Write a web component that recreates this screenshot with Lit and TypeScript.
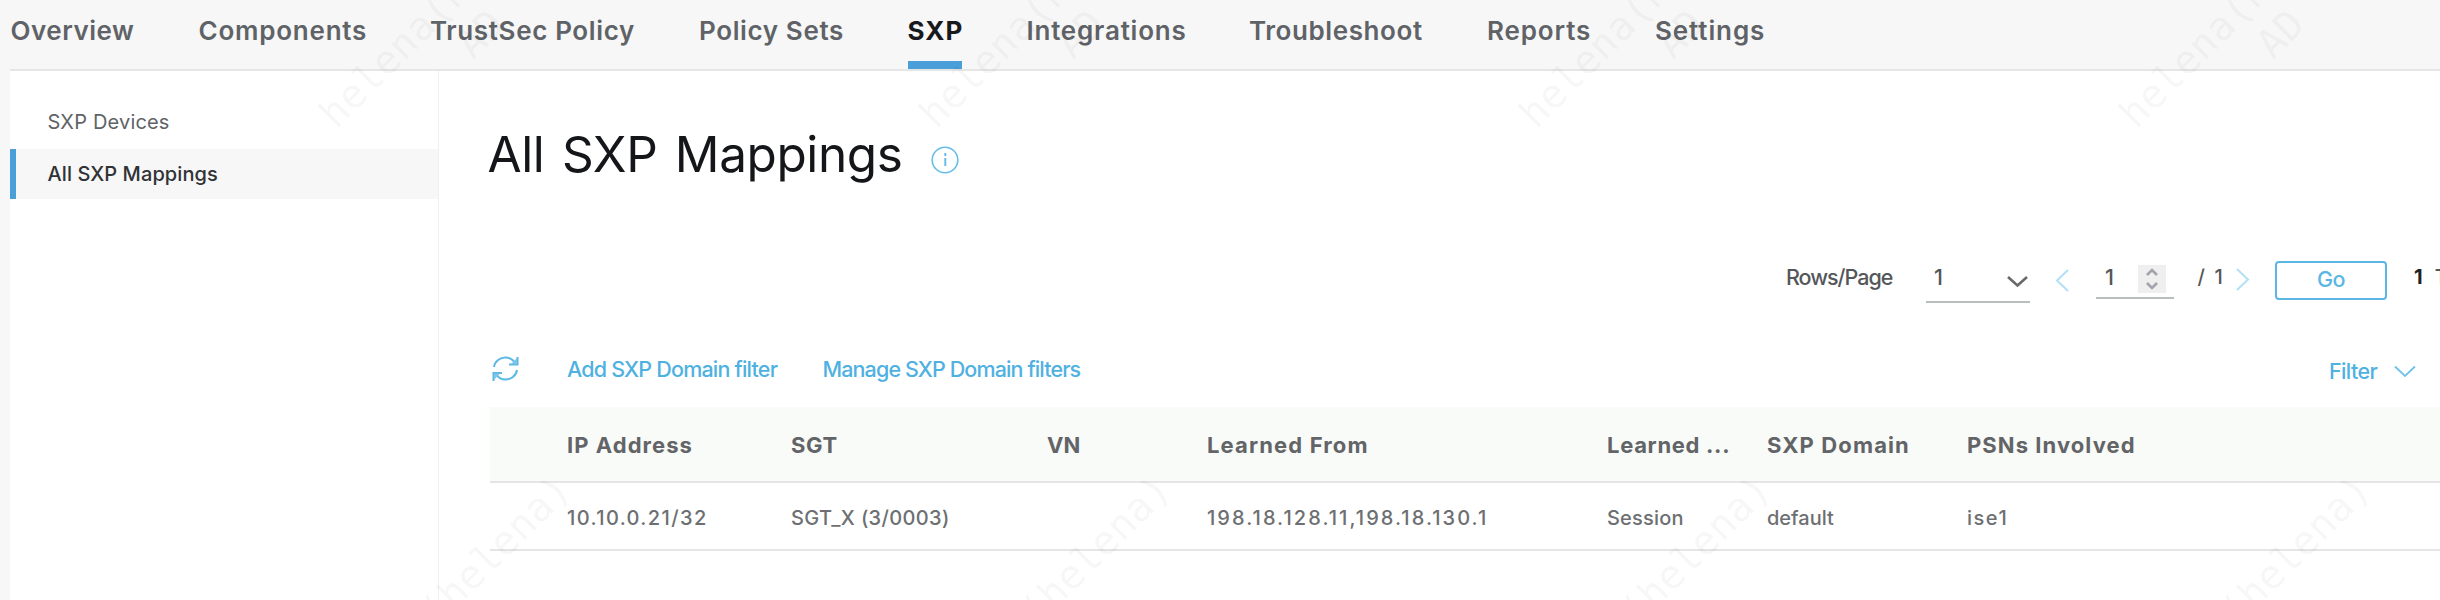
import { LitElement, html, svg, css } from 'lit';
import { customElement } from 'lit/decorators.js';
import { styleMap } from 'lit/directives/style-map.js';
import { classMap } from 'lit/directives/class-map.js';

type Label = { text: string; tracking: number };
const label = (text: string, tracking = 0): Label => ({ text, tracking });

const tabs = [
  label('Overview', 0.51), label('Components', 0.77), label('TrustSec Policy', 0.64),
  label('Policy Sets', 0.62), label('SXP', 1.05), label('Integrations', 0.78),
  label('Troubleshoot', 0.59), label('Reports', 0.86), label('Settings', 0.89),
];

const columns = [
  label('IP Address', 1.05), label('SGT', 0.68), label('VN', 0), label('Learned From', 1.14),
  label('Learned ...', 0.69), label('SXP Domain', 1.12), label('PSNs Involved', 1.07),
];

const rows = [[
  label('10.10.0.21/32', 1.4), label('SGT_X (3/0003)', 0.35), label(''),
  label('198.18.128.11,198.18.130.1', 2.05), label('Session', 0.2),
  label('default', 0), label('ise1', 1.5),
]];

const tracked = (l: Label) => styleMap({ letterSpacing: `${l.tracking}px` });

@customElement('app-root')
export class AppRoot extends LitElement {
  static styles = css`
    :host {
      display: block;
      position: relative;
      height: 600px;
      overflow: hidden;
      background: #f7f7f7;
      color: #5f6367;
      font-family: Inter, 'Liberation Sans', sans-serif;
      white-space: nowrap;
    }
    * { box-sizing: border-box; }
    svg { display: block; fill: none; flex: none; }
    .tabs {
      display: grid;
      grid-template-columns: 188px 231.5px 269px 208.5px 119px 222.5px 238px 168px 200px;
      height: 71px;
      margin-left: 10px;
      padding-left: 0.5px;
      border-bottom: 2px solid #e6e6e6;
      font-size: 26px;
      font-weight: 600;
      line-height: 61px;
    }
    .tab { justify-self: start; height: 69px; }
    .tab.on {
      color: #17191c;
      font-weight: 700;
      width: 54px;
      border-bottom: 8px solid #4a9fd8;
    }
    .body {
      display: grid;
      grid-template-columns: 429px 1fr;
      height: 529px;
      margin-left: 10px;
      background: #fff;
    }
    .side { border-right: 1px solid #f0f0f0; padding-top: 25px; font-size: 20px; }
    .item { height: 50px; line-height: 53px; padding-left: 37.5px; margin-bottom: 3px; letter-spacing: 0.18px; }
    .item.on {
      background: #f7f7f7;
      border-left: 6px solid #4a9fd8;
      padding-left: 31.5px;
      line-height: 51px;
      color: #303236;
      font-weight: 500;
      letter-spacing: 0.08px;
    }
    .main { padding-left: 51px; min-width: 0; overflow: hidden; }
    .title { display: flex; align-items: center; height: 60px; margin-top: 53px; }
    h1 {
      flex: none;
      margin: 0 0 0 -2.5px;
      font-size: 49.5px;
      line-height: 60px;
      font-weight: 400;
      letter-spacing: -0.41px;
      word-spacing: 4px;
      color: #141619;
      width: 443px;
    }
    .info { margin-top: 11px; }
    .pager {
      display: flex;
      height: 44px;
      margin: 77px 0 0 1296px;
      font-size: 21.5px;
      font-weight: 500;
      line-height: 33px;
      color: #54575a;
    }
    .pager > * { flex: none; }
    .pager .text { letter-spacing: -1.02px; width: 140px; }
    .select {
      display: flex;
      justify-content: space-between;
      width: 104px;
      height: 42px;
      padding: 0 2px 0 8px;
      border-bottom: 2.5px solid #b8bfba;
    }
    .select svg { margin-top: 14px; }
    .prev { margin: 8px 27px 0 25px; }
    .number {
      display: flex;
      justify-content: space-between;
      width: 78px;
      height: 38px;
      padding: 0 8px 0 9px;
      border-bottom: 2.5px solid #b8bfba;
    }
    .spin { margin-top: 4px; background: #efefef; }
    .of { font-size: 20px; letter-spacing: 2.08px; margin-left: 23.5px; width: 38.5px; }
    .next { margin: 7px 25px 0 0; }
    .go {
      width: 112px;
      height: 39px;
      border: 2px solid #5cb6e4;
      border-radius: 4px;
      background: #fff;
      color: #5cb6e4;
      font: inherit;
      letter-spacing: -0.47px;
      line-height: 32px;
      padding: 0 0 3px;
    }
    .total { margin-left: 27px; font-size: 20px; font-weight: 500; }
    .total b { color: #222; font-weight: 700; margin-right: 12px; }
    .tools {
      display: flex;
      height: 102px;
      font-size: 21.5px;
      font-weight: 500;
      line-height: 27px;
      color: #4fb1e2;
    }
    .refresh { margin: 51px 48.5px 0 1.5px; }
    .add { margin-top: 51px; width: 255.5px; letter-spacing: -0.8px; }
    .manage { margin-top: 51px; letter-spacing: -0.88px; width: 1506.5px; }
    .filter { display: flex; gap: 17px; margin-top: 53px; letter-spacing: -0.63px; }
    .filter svg { margin-top: 7px; }
    .row {
      display: grid;
      grid-template-columns: 224px 256px 160px 400px 160px 200px 1fr;
      padding-left: 77px;
      border-bottom: 2px solid #e4e5e4;
    }
    .head {
      height: 76px;
      line-height: 77px;
      background: #f9fbf8;
      font-size: 22px;
      font-weight: 700;
      color: #626467;
    }
    .record { height: 68px; line-height: 71px; font-size: 20px; font-weight: 500; color: #6d6f72; }
    .marks {
      position: absolute;
      inset: 0;
      pointer-events: none;
      fill: #000;
      fill-opacity: 0.052;
      font: 40px 'DejaVu Sans Mono', monospace;
    }
  `;

  private mark(x: number, y: number, text: string) {
    return svg`<text transform="translate(${x} ${y}) rotate(-45)">${text}</text>`;
  }

  render() {
    return html`
      <nav class="tabs">
        ${tabs.map((t) => html`
          <span class=${classMap({ tab: true, on: t.text === 'SXP' })} style=${tracked(t)}>${t.text}</span>`)}
      </nav>
      <div class="body">
        <aside class="side">
          <div class="item">SXP Devices</div>
          <div class="item on">All SXP Mappings</div>
        </aside>
        <main class="main">
          <div class="title">
            <h1>All SXP Mappings</h1>
            <svg class="info" width="28" height="28" stroke="#67bde8">
              <circle cx="14" cy="14" r="12.8" stroke-width="1.6" />
              <path d="M14.3 12v8M14.3 7v3" stroke-width="2" />
            </svg>
          </div>
          <div class="pager">
            <span class="text">Rows/Page</span>
            <div class="select"><span>1</span>
              <svg width="21" height="13" stroke="#67696b" stroke-width="2.6"><path d="M1 2l9.5 8.5L20 2" /></svg>
            </div>
            <svg class="prev" width="14" height="23" stroke="#b2e0f6" stroke-width="2"><path d="M13 1L2 11.5 13 22" /></svg>
            <div class="number"><span>1</span>
              <svg class="spin" width="28" height="28" stroke="#a3a3ac" stroke-width="2.6">
                <path d="M9 10l5-5 5 5M9 18l5 5 5-5" />
              </svg>
            </div>
            <span class="of">/ 1</span>
            <svg class="next" width="14" height="23" stroke="#b2e0f6" stroke-width="2"><path d="M1 1l11 10.5L1 22" /></svg>
            <button class="go">Go</button>
            <span class="total"><b>1</b>T</span>
          </div>
          <div class="tools">
            <svg class="refresh" width="27" height="26" viewBox="0 0 27 26" stroke="#5cb8e4" stroke-width="2">
              <path d="M2 11C3 5 8 1.5 13.5 1.5c4 0 7.5 2 9.500 5.500M25.500 1v7.500h-8.500" />
              <path d="M25 14c-1 6-6 9.500-11.500 9.500C9.500 23.500 6 21.500 4 18M1.500 25v-8H10" />
              <path d="M25 2v6h-6zM2 24v-6.500h6z" fill="#7cc6ea" stroke="none" />
            </svg>
            <span class="add">Add SXP Domain filter</span>
            <span class="manage">Manage SXP Domain filters</span>
            <span class="filter">Filter
              <svg width="22" height="13" stroke="#6fc2ea" stroke-width="1.8"><path d="M1 1.500l10 9.500 10-9.500" /></svg>
            </span>
          </div>
          <div class="row head">${columns.map((c) => html`<span style=${tracked(c)}>${c.text}</span>`)}</div>
          ${rows.map((r) => html`
            <div class="row record">${r.map((c) => html`<span style=${tracked(c)}>${c.text}</span>`)}</div>`)}
        </main>
      </div>
      <svg class="marks" width="2440" height="600">
        ${[0, 1, 2, 3].map((i) => [
          this.mark(336 + i * 600, 130, 'helena(helena)'),
          this.mark(473 + i * 600, 60.5, 'AD'),
          this.mark(335 + i * 600, 730, 'helena(helena)'),
        ])}
      </svg>`;
  }
}
